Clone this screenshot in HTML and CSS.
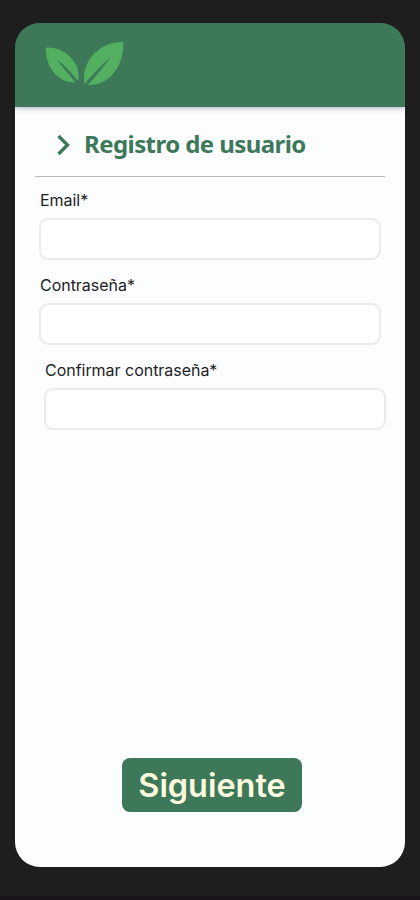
FILE: index.html
```html
<!DOCTYPE html>
<html lang="es">
<head>
<meta charset="utf-8">
<title>Registro de usuario</title>
<link rel="stylesheet" href="styles.css">
</head>
<body>
<main class="screen">
  <header class="header">
    <svg class="logo" width="80" height="46" viewBox="45 40 80 46" aria-hidden="true">
      <path d="M46 47.500C62 46.500 80 60 78.600 78L78 81C72 74 66 66 56.500 59.500C63 67 69 75 75.500 82.500C58 83 45 67 46 47.500Z"/>
      <path d="M123.300 42C102 41.500 83.500 58 84 79.500L84.300 84C92 75 101 66 110.500 57C103 68 95 77 87.500 85C108 86.500 124.500 67 123.300 42Z"/>
    </svg>
  </header>
  <form class="form">
    <div class="heading">
      <svg class="chevron" width="14" height="22" viewBox="0 0 14 22" aria-hidden="true"><path d="M1.500 2L10.500 11L1.500 20"/></svg>
      <h1 class="title">Registro de usuario</h1>
    </div>
    <label class="field">Email*<input class="input" type="email"></label>
    <label class="field">Contraseña*<input class="input" type="password"></label>
    <label class="field field-confirm">Confirmar contraseña*<input class="input" type="password"></label>
    <button class="next" type="button">Siguiente</button>
  </form>
</main>
</body>
</html>
```
FILE: styles.css
```css
* { box-sizing: border-box; }
body {
  margin: 0;
  height: 900px;
  padding: 23px 15px 29px;
  background: #1e1e1e linear-gradient(#1b141b, #1b141b) 0 896px / 100% 4px no-repeat;
  font-family: Inter, sans-serif;
  color: #1e1e1e;
}
.screen {
  height: 844px;
  display: flex;
  flex-direction: column;
  border-radius: 25px;
  overflow: hidden;
  background: linear-gradient(#3d7859 50px, #fcfdff 50px);
}
.header {
  height: 84px;
  flex: none;
  padding: 17px 30px;
  background: #3d7859;
  box-shadow: 0 2px 4px rgba(30, 40, 70, 0.25);
}
.logo { display: block; fill: #52b060; }
.form {
  flex: 1;
  display: flex;
  flex-direction: column;
  padding: 0 20px 55px;
}
.heading {
  height: 70px;
  display: flex;
  align-items: center;
  padding: 6px 0 0 22px;
  border-bottom: 1px solid #b6b5ce;
}
.chevron {
  flex: none;
  fill: none;
  stroke: #3d7859;
  stroke-width: 3.4;
}
.title {
  margin: 0 0 2px 13px;
  font: bold 24px/30px "Noto Sans", sans-serif;
  letter-spacing: -0.57px;
  white-space: nowrap;
  color: #3d7859;
}
.field {
  height: 85px;
  width: 342px;
  margin-left: 4px;
  padding: 11px 0 0 1px;
  font-size: 16px;
  line-height: 24px;
  letter-spacing: -0.03px;
}
.field-confirm { margin-left: 9px; }
.input {
  display: block;
  width: 342px;
  height: 42px;
  margin: 6px 0 0 -1px;
  border: 2px solid #ebebec;
  border-radius: 9px;
  background: #fff;
}
.next {
  width: 180px;
  height: 54px;
  margin: auto 0 0 87px;
  padding: 2px 0 0;
  border: 0;
  border-radius: 8px;
  background: #3d7859;
  color: #fff9df;
  font: 600 32.4px/52px Inter, sans-serif;
}
```
